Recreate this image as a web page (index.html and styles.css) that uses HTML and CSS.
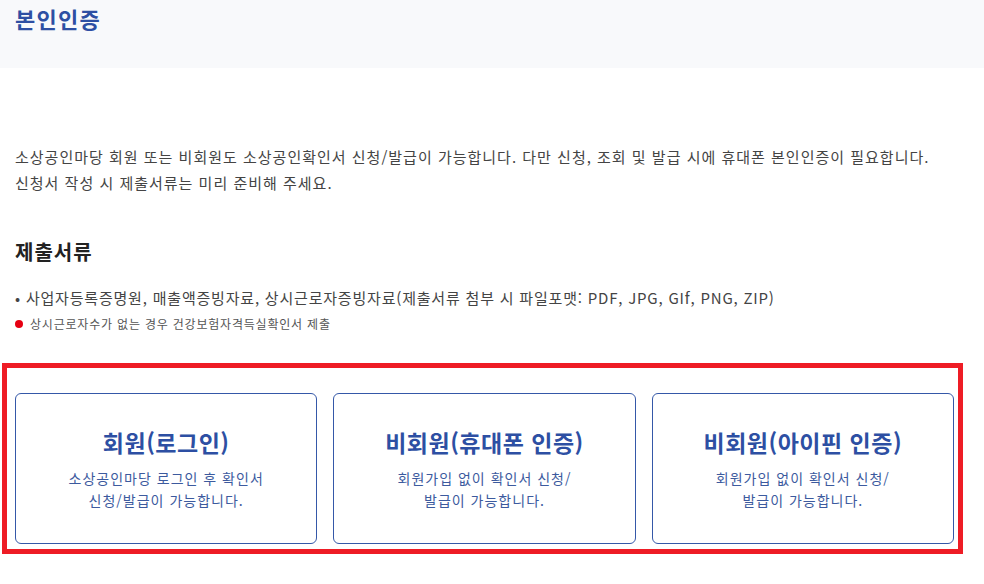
FILE: index.html
```html
<!DOCTYPE html>
<html lang="ko">
<head>
    <meta charset="UTF-8">
    <meta name="viewport" content="width=device-width, initial-scale=1.0">
    <title>본인인증</title>
    <link rel="stylesheet" href="styles.css">
</head>
<body>
    <!-- 상단 제목 영역 -->
    <div class="page-head">
        <h1>본인인증</h1>
    </div>

    <div class="content">
        <p class="intro">
            소상공인마당 회원 또는 비회원도 소상공인확인서 신청/발급이 가능합니다. 다만 신청, 조회 및 발급 시에 휴대폰 본인인증이 필요합니다.<br>
            신청서 작성 시 제출서류는 미리 준비해 주세요.
        </p>

        <h2>제출서류</h2>
        <p class="doc-list">• 사업자등록증명원, 매출액증빙자료, 상시근로자증빙자료(제출서류 첨부 시 파일포맷: PDF, JPG, GIf, PNG, ZIP)</p>
        <p class="note"><span class="dot"></span>상시근로자수가 없는 경우 건강보험자격득실확인서 제출</p>
    </div>

    <!-- 인증 방법 선택 -->
    <div class="highlight">
        <div class="cards">
            <a class="card" href="#">
                <strong>회원(로그인)</strong>
                <span>소상공인마당 로그인 후 확인서<br>신청/발급이 가능합니다.</span>
            </a>
            <a class="card" href="#">
                <strong>비회원(휴대폰 인증)</strong>
                <span>회원가입 없이 확인서 신청/<br>발급이 가능합니다.</span>
            </a>
            <a class="card" href="#">
                <strong>비회원(아이핀 인증)</strong>
                <span>회원가입 없이 확인서 신청/<br>발급이 가능합니다.</span>
            </a>
        </div>
    </div>
</body>
</html>
```

FILE: styles.css
```css
body {
    margin: 0;
    padding: 0;
    font-family: "Noto Sans CJK KR", "Noto Sans", sans-serif;
    color: #444;
    background: #fff;
}
.page-head {
    height: 68px;
    background-color: #f8f9fb;
    padding-left: 15px;
}
.page-head h1 {
    margin: 0;
    font-size: 22px;
    line-height: 36px;
    font-weight: 700;
    letter-spacing: 1.3px;
    color: #2d4fa3;
}
.content {
    padding: 0 15px;
}
.intro {
    margin: 76px 0 0;
    font-size: 15px;
    line-height: 26px;
    letter-spacing: 1px;
    color: #444;
}
.content h2 {
    margin: 41px 0 0;
    font-size: 20px;
    line-height: 30px;
    font-weight: 700;
    letter-spacing: 1px;
    color: #222;
}
.doc-list {
    margin: 19px 0 0;
    font-size: 15px;
    line-height: 24px;
    letter-spacing: 0.8px;
    color: #444;
}
.note {
    margin: 4px 0 0;
    font-size: 12px;
    line-height: 20px;
    letter-spacing: 0.8px;
    color: #555;
    display: flex;
    align-items: center;
}
.note .dot {
    width: 8px;
    height: 8px;
    border-radius: 50%;
    background-color: #e60012;
    margin-right: 7px;
}
.highlight {
    margin: 29px 0 0 2px;
    width: 939px;
    border: 5px solid #ee1c25;
    padding: 25px 4px 5px 8px;
}
.cards {
    display: grid;
    grid-template-columns: repeat(3, 1fr);
    gap: 16px;
}
.card {
    height: 151px;
    box-sizing: border-box;
    border: 1px solid #3558a8;
    border-radius: 6px;
    display: flex;
    flex-direction: column;
    align-items: center;
    justify-content: center;
    text-align: center;
    text-decoration: none;
}
.card strong {
    font-size: 23px;
    line-height: 32px;
    font-weight: 700;
    letter-spacing: 0.5px;
    color: #2d4fa3;
}
.card span {
    margin-top: 9px;
    font-size: 14px;
    line-height: 22px;
    letter-spacing: 1px;
    color: #3c5a9e;
}
```
